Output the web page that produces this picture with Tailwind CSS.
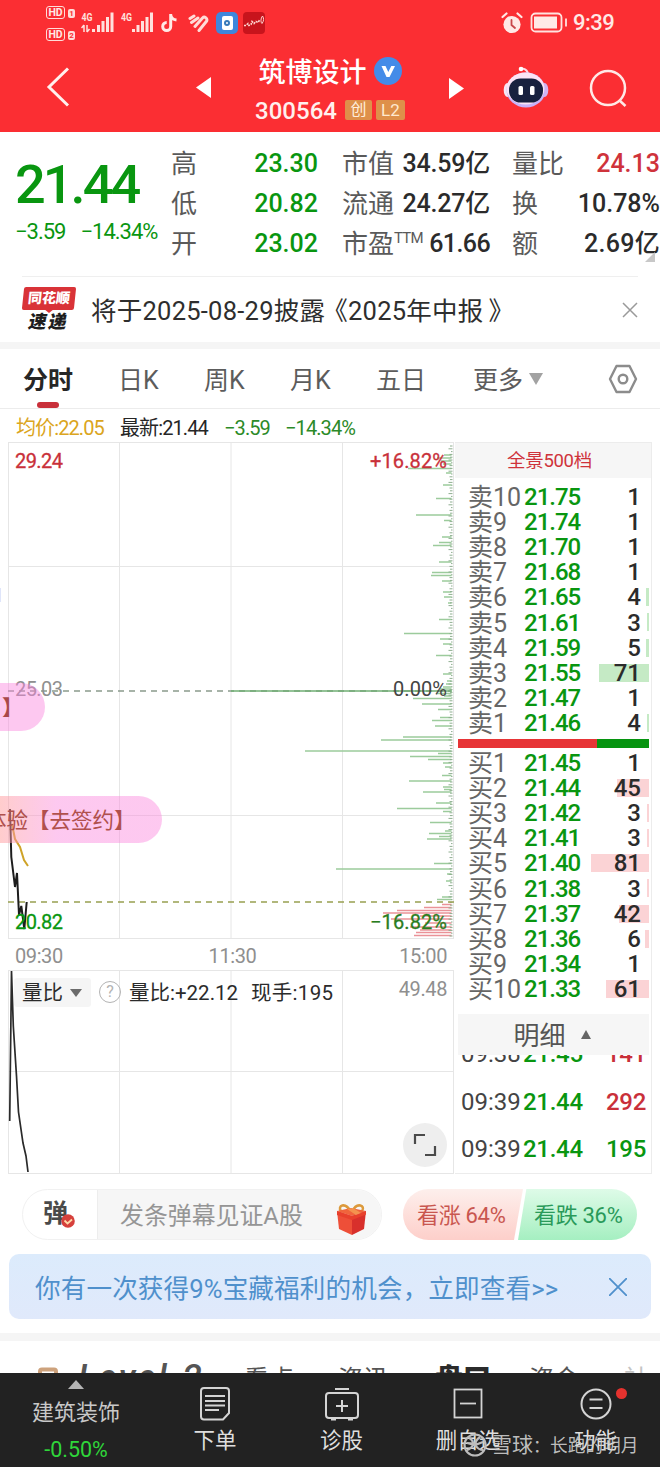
<!DOCTYPE html>
<html lang="zh-CN">
<head>
    <meta charset="UTF-8">
    <title>筑博设计 300564</title>
    <script src="https://cdn.jsdelivr.net/npm/@tailwindcss/browser@4"></script>
</head>
<body class="w-[660px] h-[1467px] overflow-hidden bg-white text-[#2b2b2b] font-[Roboto,'Noto_Sans_CJK_SC',sans-serif] whitespace-nowrap">
<div class="relative flex flex-col w-[660px] h-[1467px] overflow-hidden">

    <!-- 状态栏 -->
    <header class="h-[132px] shrink-0 bg-[#fb2e33] text-[#ffe9e6]">
        <div class="flex items-center h-[45px] pl-[46px] pr-[46px]">
            <div class="flex flex-col gap-[9px] w-[30px] mt-[2px]">
                <div class="flex items-center gap-[3px]">
                    <span class="w-[19px] h-[13px] border-[1.500px] border-[#ffdcd8] rounded-[3px] text-[10.500px] leading-[11px] font-bold text-center">HD</span>
                    <span class="w-[7px] h-[9px] mt-[2px] rounded-[2px] bg-[#ffdcd8] text-[#fb2e33] text-[8px] leading-[9px] font-bold text-center">1</span>
                </div>
                <div class="flex items-center gap-[3px]">
                    <span class="w-[19px] h-[13px] border-[1.500px] border-[#ffdcd8] rounded-[3px] text-[10.500px] leading-[11px] font-bold text-center">HD</span>
                    <span class="w-[7px] h-[9px] mt-[2px] rounded-[2px] bg-[#ffdcd8] text-[#fb2e33] text-[8px] leading-[9px] font-bold text-center">2</span>
                </div>
            </div>
            <svg class="ml-[5px] w-[34px] h-[24px]" viewBox="81 11 34 24" fill="#ffe1dd">
                <text x="81.500" y="20.500" font-size="10.500" font-weight="700" textLength="11" lengthAdjust="spacingAndGlyphs">4G</text>
                <path d="M84 25v7M84 25l-2.500 3M87 25v7M87 32l2.500-3" stroke="#ffe1dd" stroke-width="1.500" fill="none"/>
                <path d="M92 29h3v3h-3zM97 25h3v7h-3zM101.500 21h3v11h-3zM106 17h3v15h-3zM110.500 12.500h3V32h-3z"/>
            </svg>
            <svg class="ml-[5px] w-[34px] h-[24px]" viewBox="120 11 34 24" fill="#ffe1dd">
                <text x="121" y="20.500" font-size="10.500" font-weight="700" textLength="11" lengthAdjust="spacingAndGlyphs">4G</text>
                <path d="M132 29h3v3h-3zM136.500 25h3v7h-3zM141 21h3v11h-3zM145.500 17h3v15h-3zM150 12.500h3V32h-3z"/>
            </svg>
            <svg class="ml-[7px] w-[17px] h-[20px]" viewBox="0 0 17 20" fill="none" stroke="#ffe9e6" stroke-width="3">
                <path d="M9.700 1v12.500a4 4 0 1 1-4-4M9.700 2c.600 3.200 2.600 4.700 5.800 5"/>
            </svg>
            <!-- 运动健康 -->
            <svg class="ml-[10px] w-[21px] h-[18px]" viewBox="0 0 21 18" fill="none" stroke="#ffdcd8" stroke-width="3" stroke-linecap="round">
                <path d="M2 4.500l4-2.500M3.500 8.500L10 4M7 12.500L14.500 4c2-2 5.200 0 4.200 3L11 16.500"/>
            </svg>
            <div class="ml-[7px] w-[22px] h-[22px] rounded-[5px] bg-[#3f86dc] flex items-center justify-center">
                <div class="w-[11px] h-[14px] rounded-[2px] bg-white flex items-center justify-center">
                    <div class="w-[6px] h-[6px] rounded-full border-2 border-[#3878b8]"></div>
                </div>
            </div>
            <svg class="ml-[5px] w-[22px] h-[22px]" viewBox="0 0 22 22">
                <rect width="22" height="22" rx="4" fill="#c8141c"/>
                <path d="M1 13.500h2l2-2 1 2 2-1 1-3 2 2 2-2 2 1 2-3" stroke="#ffd5d0" stroke-width="1.600" stroke-dasharray="2 1" fill="none"/>
                <path d="M19.500 4c1.500 2 1.500 5-.500 7.500-1.500-1-1.500-5 .500-7.500" stroke="#ffd5d0" fill="none"/>
            </svg>
            <svg class="ml-auto w-[22px] h-[22px]" viewBox="0 0 22 22" fill="none" stroke="#ffe9e6" stroke-width="2.200" stroke-linecap="round">
                <circle cx="11" cy="12.500" r="8.600" fill="#ffe9e6" stroke="none"/>
                <path d="M1.500 5l4-3.500M20.500 5l-4-3.500"/>
                <path d="M10.500 8v5l3.500 3" stroke="#c8474a" stroke-width="1.800"/>
            </svg>
            <svg class="ml-[7px] w-[38px] h-[21px]" viewBox="0 0 38 21" fill="none" stroke="#ffe3e0" stroke-width="1.800">
                <rect x="1.500" y="1.500" width="30" height="18" rx="4"/>
                <rect x="4" y="4.500" width="23" height="12" fill="#ffe9e6" stroke="none"/>
                <path d="M36 6.500v8"/>
            </svg>
            <span class="ml-[5px] w-[41px] text-[22px] tracking-[-0.500px] font-medium">9:39</span>
        </div>

        <!-- 标题栏 -->
        <div class="grid grid-cols-[240px_180px_240px] h-[87px]">
            <div class="flex items-center pb-[3px]">
                <svg class="ml-[46px] w-[24px] h-[40px]" viewBox="0 0 24 40" fill="none" stroke="#fff0ee" stroke-width="3"><path d="M22 1.500L3 20l19 18.500"/></svg>
                <svg class="ml-[126px] mt-[2px] w-[16px] h-[22px]" viewBox="0 0 16 22" fill="#fff"><path d="M15 0v21L0 10.500z"/></svg>
            </div>
            <div class="flex flex-col items-center">
                <div class="flex items-center gap-[7px] h-[38px] mt-[7px] text-white">
                    <span class="mt-[4px] text-[27px] font-medium">筑博设计</span>
                    <svg class="w-[28px] h-[28px]" viewBox="0 0 28 28"><circle cx="14" cy="14" r="14" fill="#448be8"/><path d="M7.500 9h4l2.800 6 3-6H21l-5.500 11h-3z" fill="#fff"/></svg>
                </div>
                <div class="flex items-center h-[30px] mt-[5px]">
                    <span class="text-[24px] font-medium text-[#fff0ee] mt-[2px]">300564</span>
                    <span class="ml-[8px] w-[27px] h-[20px] rounded-[2px] bg-[#de904a] text-[#ffeedc] text-[16px] leading-[20px] text-center">创</span>
                    <span class="ml-[4px] w-[29px] h-[20px] rounded-[2px] bg-[#de904a] text-[#ffe9cf] text-[17px] leading-[21px] text-center">L2</span>
                </div>
            </div>
            <div class="flex items-center">
                <svg class="ml-[28px] w-[16px] h-[22px]" viewBox="0 0 16 22" fill="#fff"><path d="M1 0v21l15-10.500z"/></svg>
                <svg class="ml-[39px] mb-[4px] w-[46px] h-[42px]" viewBox="0 0 46 42">
                    <path d="M25 9c0-4-2-6-6-6.500" stroke="#ffd9e4" stroke-width="2" fill="none"/>
                    <circle cx="18" cy="3" r="2.300" fill="#fff"/>
                    <ellipse cx="4.500" cy="24" rx="3.800" ry="7" fill="#f8e6f4"/>
                    <ellipse cx="41.500" cy="24" rx="3.800" ry="7" fill="#d4b4f0"/>
                    <ellipse cx="23" cy="24" rx="19.500" ry="17.500" fill="#c9b2fa"/>
                    <ellipse cx="22.500" cy="22.500" rx="19" ry="16" fill="#fbe4f6"/>
                    <rect x="6" y="12.500" width="34" height="24" rx="11.500" fill="#18213f"/>
                    <rect x="15.500" y="20" width="4.500" height="9" rx="1.500" fill="#fff"/>
                    <rect x="27" y="20" width="4.500" height="9" rx="1.500" fill="#fff"/>
                </svg>
                <svg class="ml-[40px] w-[40px] h-[40px]" viewBox="0 0 40 40" fill="none" stroke="#ffe9e6" stroke-width="2.500"><circle cx="19" cy="19" r="17"/><path d="M30 31l6.500 6"/></svg>
            </div>
        </div>
    </header>

    <!-- 行情 -->
    <section class="relative flex h-[144px] shrink-0">
        <div class="w-[171px] pl-[15px] pt-[23px] text-[#099610]">
            <div class="text-[54px] leading-[60px] tracking-[-2.900px] font-medium">21.44</div>
            <div class="flex gap-[15px] mt-[5px] text-[22px] leading-[24px] tracking-[-1px]"><span>−3.59</span><span>−14.34%</span></div>
        </div>
        <div class="flex flex-col w-[147px] pt-[12px] text-[26px] leading-[40px] text-[#5a5a5a]">
            <div class="flex justify-between"><span>高</span><span class="text-[25px] font-medium text-[#099610]">23.30</span></div>
            <div class="flex justify-between"><span>低</span><span class="text-[25px] font-medium text-[#099610]">20.82</span></div>
            <div class="flex justify-between"><span>开</span><span class="text-[25px] font-medium text-[#099610]">23.02</span></div>
        </div>
        <div class="flex flex-col w-[148px] ml-[24px] pt-[12px] text-[26px] leading-[40px] text-[#5a5a5a]">
            <div class="flex justify-between"><span>市值</span><span class="text-[25px] tracking-[-0.200px] font-medium text-[#2b2b2b]">34.59亿</span></div>
            <div class="flex justify-between"><span>流通</span><span class="text-[25px] tracking-[-0.200px] font-medium text-[#2b2b2b]">24.27亿</span></div>
            <div class="flex justify-between"><span class="flex">市盈<span class="text-[15px] leading-[29px] tracking-[-0.800px]">TTM</span></span><span class="text-[25px] tracking-[-0.600px] font-medium text-[#2b2b2b]">61.66</span></div>
        </div>
        <div class="flex flex-col w-[148px] ml-[22px] pt-[12px] text-[26px] leading-[40px] text-[#5a5a5a]">
            <div class="flex justify-between"><span>量比</span><span class="text-[25px] font-medium text-[#cf333b]">24.13</span></div>
            <div class="flex justify-between"><span>换</span><span class="text-[25px] font-medium text-[#2b2b2b]">10.78%</span></div>
            <div class="flex justify-between"><span>额</span><span class="text-[25px] tracking-[0.300px] font-medium text-[#2b2b2b]">2.69亿</span></div>
        </div>
        <svg class="absolute left-[645px] top-[120px] w-[10px] h-[10px]" viewBox="0 0 10 10" fill="#c8c8c8"><path d="M10 0v10H0z"/></svg>
    </section>

    <!-- 公告 -->
    <section class="h-[66px] shrink-0 pl-[22px] pr-[22px]">
        <div class="flex items-center h-full border-t border-[#efefef]">
            <div class="w-[54px] h-[46px] flex flex-col items-center">
                <div class="w-[52px] h-[23px] -skew-x-6 rounded-[2px] bg-[#d93338] text-white text-[14px] leading-[22px] font-black text-center">同花顺</div>
                <div class="-mt-px w-0 h-0 border-x-[5px] border-x-transparent border-t-[4px] border-t-[#d93338]"></div>
                <div class="-mt-[3px] -skew-x-12 text-[18px] leading-[23px] font-black tracking-[2px] text-[#1e1e1e]">速递</div>
            </div>
            <span class="ml-[15px] mt-[3px] text-[25.500px] tracking-[0.250px] text-[#2e2e2e]">将于2025-08-29披露<span class="-ml-[3px]">《</span>2025年中报<span class="ml-[5px]">》</span></span>
            <svg class="ml-auto w-[16px] h-[16px]" viewBox="0 0 16 16" stroke="#9a9a9a" stroke-width="1.500"><path d="M1 1l14 14M15 1L1 15"/></svg>
        </div>
    </section>
    <div class="h-[7px] shrink-0 bg-[#f5f5f5]"></div>

    <!-- 周期切换 -->
    <nav class="relative flex items-center h-[60px] shrink-0 border-b border-[#ececec] pl-[23px] pr-[22px] text-[25px] text-[#5c5c5c]">
        <span class="mt-[4px] w-[95px] font-bold text-[#262626]">分时</span>
        <span class="mt-[4px] w-[86px]">日K</span>
        <span class="mt-[4px] w-[86px]">周K</span>
        <span class="mt-[4px] w-[86px]">月K</span>
        <span class="mt-[4px] w-[97px]">五日</span>
        <span class="mt-[4px]">更多</span>
        <svg class="ml-[6px] w-[14px] h-[12px]" viewBox="0 0 14 12" fill="#a2a2a2"><path d="M0 0h14L7 12z"/></svg>
        <svg class="ml-auto w-[30px] h-[30px]" viewBox="0 0 30 30" fill="none" stroke="#8c8c8c" stroke-width="2.400" stroke-linejoin="round"><path d="M8.500 2h13L28 15l-6.500 13h-13L2 15z"/><circle cx="15" cy="15" r="4.300"/></svg>
        <div class="absolute left-[37px] top-[53px] w-[22px] h-[6px] rounded-full bg-[#c9303a]"></div>
    </nav>

    <div class="flex items-center h-[33px] shrink-0 pl-[16px] pt-[4px] text-[20px] tracking-[-0.900px]">
        <span class="w-[104px] text-[#dba520]">均价:22.05</span>
        <span class="w-[104px] text-[#262626]">最新:21.44</span>
        <span class="w-[61px] text-[#2c8a28]">−3.59</span>
        <span class="text-[#2c8a28]">−14.34%</span>
    </div>

    <!-- 分时图 + 盘口 -->
    <main class="flex h-[732px] shrink-0 pl-[8px]">
        <div class="flex flex-col w-[446px]">
            <svg class="w-[446px] h-[498px] shrink-0" viewBox="8 442 446 498" font-size="20">
                <path d="M8.500 442v497M119.500 442v497M231 442v497M342.500 442v497M453.500 442v497M8 442.500h446M8 566.500h446M8 815.500h446M8 938.500h446" stroke="#e6e6e6" fill="none"/>
                <path id="sellBars" stroke="#9ccb9c" stroke-width="1.600" fill="none"/>
                <path id="buyBars" stroke="#ea9298" stroke-width="1.500" fill="none"/>
                <path id="ticks" stroke="#8fae90" stroke-width="1" fill="none"/>
                <path d="M8 691h443" stroke="#8a9a8c" stroke-width="1.500" stroke-dasharray="6 5"/>
                <path d="M231 691h221" stroke="#6fae73" stroke-width="1.500"/>
                <path d="M8 902h446" stroke="#98a050" stroke-width="1.300" stroke-dasharray="6 5"/>
                <path d="M12 824l3 15 5 8 4 13 4 6" stroke="#cfa328" stroke-width="2" fill="none"/>
                <path d="M10 809l1.300 48L15 887l2-14 2 42 2.300-9 3 23 2.400-27" stroke="#1d1d1d" stroke-width="2" fill="none"/>
                <g stroke-width=".3">
                    <text x="15" y="468" fill="#c9303a" stroke="#c9303a" textLength="48">29.24</text>
                    <text x="370" y="468" fill="#c9303a" stroke="#c9303a" textLength="77">+16.82%</text>
                    <text x="15" y="696" fill="#8f8f8f" textLength="48">25.03</text>
                    <text x="393" y="695.500" fill="#444" textLength="54">0.00%</text>
                    <text x="15" y="928.500" fill="#099610" stroke="#099610" textLength="48">20.82</text>
                    <text x="370" y="928.500" fill="#2a7d1e" stroke="#2a7d1e" textLength="77">−16.82%</text>
                </g>
            </svg>
            <div class="flex items-center justify-between h-[30px] pl-[7px] pr-[7px] pt-[1px] text-[20px] tracking-[-0.400px] text-[#8f8f8f]">
                <span>09:30</span><span class="ml-[3px]">11:30</span><span>15:00</span>
            </div>
            <div class="relative h-[204px]">
                <svg class="block w-[446px] h-[204px]" viewBox="8 970 446 204">
                    <path d="M8.500 970v204M119.500 970v204M231 970v204M342.500 970v204M453.500 970v204M8 970.500h446M8 1071.500h446M8 1173.500h446" stroke="#e6e6e6" fill="none"/>
                    <path d="M9.700 1121L11.500 971l1.800 55 3.200 50 2 36 4.500 31 3 13 2 16" stroke="#2a2a2a" stroke-width="1.700" fill="none"/>
                </svg>
                <div class="absolute inset-x-0 top-[7px] flex items-center h-[30px] pl-[6px] pr-[7px] text-[20.500px] text-[#2b2b2b]">
                    <span class="flex items-center w-[77px] h-[29px] pl-[8px] pt-[2px] bg-[#f3f2f3]/80 rounded-[3px]">量比
                        <svg class="ml-[7px] w-[12px] h-[8px]" viewBox="0 0 12 8" fill="#6b6b6b"><path d="M0 0h12L6 8z"/></svg>
                    </span>
                    <span class="ml-[8px] w-[22px] h-[22px] rounded-full border-[1.500px] border-[#b3b3b3] text-[#b3b3b3] text-[16px] leading-[20px] text-center">?</span>
                    <span class="ml-[8px] mt-[2px] w-[122px]">量比:+22.12</span>
                    <span class="mt-[2px] tracking-[0.300px]">现手:195</span>
                    <span class="ml-auto mb-[7px] text-[20px] tracking-[-0.400px] text-[#8f8f8f]">49.48</span>
                </div>
                <div class="absolute left-[395px] top-[153px] w-[44px] h-[44px] rounded-full bg-[#eeeeee] flex items-center justify-center">
                    <svg class="w-[24px] h-[24px]" viewBox="0 0 24 24" fill="none" stroke="#4a4a4a" stroke-width="2.200"><path d="M2 11V2h10M22 13v9H12"/></svg>
                </div>
            </div>
        </div>

        <!-- 十档盘口 -->
        <div class="w-[197px] ml-px border-t border-r border-b border-[#ececec]">
            <div class="h-[35px] bg-[#f6f6f6] text-[18.500px] tracking-[-0.300px] leading-[37px] pl-[52px] text-[#cf333b]">全景500档</div>
            <div id="sellRows" class="h-[260px] pt-[7px]"></div>
            <div class="flex h-[9px] mt-[1px] ml-[3px] mr-[2px]">
                <div class="w-[139px] bg-[#e73436]"></div>
                <div class="grow bg-[#069410]"></div>
            </div>
            <div id="buyRows" class="h-[266px] pt-[3px]"></div>
            <div class="flex items-center justify-center h-[41px] ml-[3px] mr-[2px] bg-[#f6f6f6] text-[26px] text-[#555]"><span class="mt-[3px] -ml-[3px]">明细</span>
                <svg class="ml-[15px] w-[10px] h-[9px]" viewBox="0 0 10 9" fill="#666"><path d="M5 0l5 9H0z"/></svg>
            </div>
            <div id="trades" class="flex flex-col justify-end h-[118px] overflow-hidden"></div>
        </div>
    </main>

    <!-- 弹幕 -->
    <section class="flex items-center h-[80px] shrink-0 pl-[22px] pt-[1px]">
        <div class="flex items-center w-[360px] h-[51px] rounded-full border border-[#f1f1f1] overflow-hidden">
            <div class="relative w-[75px] h-full border-r border-[#ededed] pl-[20px] text-[25px] leading-[48px] font-bold text-[#4a4a4a]">弹
                <svg class="absolute left-[38px] top-[24px] w-[14px] h-[14px]" viewBox="0 0 14 14"><circle cx="7" cy="7" r="6.800" fill="#d6403c"/><path d="M3.500 6.500L6.500 9.500l4.500-4" stroke="#ffd9a8" stroke-width="1.800" fill="none"/></svg>
            </div>
            <div class="flex items-center grow h-full bg-[#f6f6f6] pl-[22px]">
                <span class="mt-[5px] text-[23.900px] text-[#959595]">发条弹幕见证A股</span>
                <svg class="ml-[33px] mt-[10px] w-[31px] h-[33px]" viewBox="0 0 31 33">
                    <path d="M15 9C9-2 1 3 5 8zM16 9c5-11 14-6 10-1z" fill="none" stroke="#dc9a3c" stroke-width="2.500"/>
                    <path d="M1 8l14-3 15 3-14 5z" fill="#f0643c"/>
                    <path d="M1 8l15 5v19L3 26z" fill="#ee4f38"/>
                    <path d="M30 8l-14 5v19l12-6z" fill="#d8302c"/>
                    <path d="M1 8l15 5 14-5v3.500L16 17 1 12z" fill="#e8402c"/>
                    <path d="M11 6l9 6 5-2-8-5z" fill="#f6b25a" opacity=".6"/>
                </svg>
            </div>
        </div>
        <div class="flex ml-[21px] h-[51px] text-[22px] tracking-[-0.300px]">
            <div class="w-[120px] pl-[14px] leading-[53px] rounded-l-full bg-linear-to-b from-[#fdefec] to-[#fdcfca] text-[#c9564f] [clip-path:polygon(0_0,100%_0,92.500%_100%,0_100%)]">看涨 64%</div>
            <div class="-ml-[5px] w-[119px] pl-[16px] leading-[53px] rounded-r-full bg-linear-to-b from-[#defbe8] to-[#a5efc1] text-[#2a9a5a] [clip-path:polygon(7%_0,100%_0,100%_100%,0_100%)]">看跌 36%</div>
        </div>
    </section>

    <section class="flex items-center h-[65px] shrink-0 mx-[9px] rounded-[10px] bg-linear-to-b from-[#dcebfc] to-[#e0e9fb] pl-[26px] pr-[24px] text-[25.600px] tracking-[0.120px] text-[#4f90cc]">
        <span class="mt-[5px]">你有一次获得9%宝藏福利的机会，立即查看&gt;&gt;</span>
        <svg class="ml-auto w-[18px] h-[18px]" viewBox="0 0 18 18" stroke="#4f90cc" stroke-width="1.800"><path d="M0 0l18 18M18 0L0 18"/></svg>
    </section>
    <div class="h-[8px] mt-[14px] shrink-0 bg-[#f5f5f5]"></div>

    <nav class="flex h-[32px] shrink-0 overflow-hidden pl-[37px] pt-[22px] text-[25px] leading-[34px] text-[#555]">
        <svg class="w-[22px] h-[24px] mt-[4px] shrink-0" viewBox="0 0 22 24" fill="none" stroke="#cda27c" stroke-width="4"><rect x="3" y="2.500" width="16" height="18" rx="2"/></svg>
        <span class="ml-[19px] w-[166px] shrink-0 text-[35px] leading-[29px] italic font-medium tracking-[2.200px]">Level-2</span>
        <span class="w-[94px] shrink-0">看点</span>
        <span class="w-[97px] shrink-0">资讯</span>
        <span class="w-[94px] shrink-0 text-[28px] font-black text-[#2b2b2b]">盘口</span>
        <span class="w-[95px] shrink-0">资金</span>
        <span class="shrink-0 text-[#c4c4c4]">社</span>
    </nav>

    <!-- 底部导航 -->
    <footer class="relative h-[94px] shrink-0 bg-[#222222] text-[#dedede] text-[21.500px] grid grid-cols-[152px_126px_127px_126px_129px]">
        <div class="flex flex-col items-center">
            <svg class="mt-[7px] w-[16px] h-[9px]" viewBox="0 0 16 9" fill="#b5b5b5"><path d="M8 0l8 9H0z"/></svg>
            <span class="mt-[8px] text-[22px] leading-[32px] text-[#c8c8c8]">建筑装饰</span>
            <span class="mt-[6px] text-[21.500px] leading-[30px] text-[#2fd63a]">-0.50%</span>
        </div>
        <div class="flex flex-col items-center pt-[13px]">
            <svg class="w-[32px] h-[36px]" viewBox="0 0 32 36" fill="none" stroke="#d4d4d4" stroke-width="2"><path d="M5 2h22a3 3 0 0 1 3 3v22l-6 6.500H5a3 3 0 0 1-3-3V5a3 3 0 0 1 3-3zM6 10h20M6 15h20M6 19.500h20M6 24h14"/></svg>
            <span class="mt-[4px] leading-[30px]">下单</span>
        </div>
        <div class="flex flex-col items-center pt-[13px]">
            <svg class="w-[36px] h-[36px]" viewBox="0 0 36 36" fill="none" stroke="#d4d4d4" stroke-width="2"><rect x="2" y="7" width="32" height="25" rx="3"/><path d="M11 3h14M18 14v12M12 20h12M7 33.500h5M24 33.500h5"/></svg>
            <span class="mt-[4px] leading-[30px]">诊股</span>
        </div>
        <div class="flex flex-col items-center pt-[13px]">
            <svg class="w-[32px] h-[36px]" viewBox="0 0 32 36" fill="none" stroke="#d4d4d4" stroke-width="1.800"><rect x="2.500" y="3.500" width="27" height="28"/><path d="M8 17.500h16"/></svg>
            <span class="mt-[4px] leading-[30px]">删自选</span>
        </div>
        <div class="flex flex-col items-center pt-[13px]">
            <svg class="w-[34px] h-[36px]" viewBox="0 0 34 36" fill="none" stroke="#d4d4d4" stroke-width="2"><circle cx="17" cy="18" r="14.500"/><path d="M10.500 13.500h13M10.500 22h13"/></svg>
            <span class="mt-[4px] leading-[30px]">功能</span>
        </div>
        <div class="absolute left-[616px] top-[15px] w-[11px] h-[11px] rounded-full bg-[#e5322e]"></div>
        <!-- 水印 -->
        <div class="absolute left-[463px] top-[58px] flex items-center h-[28px] text-[#d2d2d2]/90">
            <svg class="w-[24px] h-[24px]" viewBox="0 0 24 24" fill="none" stroke="#bdbdbd" stroke-width="2.200"><circle cx="12" cy="12" r="10.500"/><path d="M6 5c3 1 5 5 4 7s-4 5-6 5M17 4c-3 2-6 6-4 9s5 4 7 4M4 10l8 2 8-3"/></svg>
            <span class="ml-[4px] mt-[2px] w-[59px] text-[21px]">雪球<span class="text-[17px]">：</span></span>
            <span class="mt-[2px] text-[17.700px]">长跑的明月</span>
        </div>
    </footer>

    <!-- 弹幕气泡 -->
    <div class="absolute left-0 top-[683px] w-[45px] h-[48px] rounded-r-full bg-[#fb86dd]/45 text-[#a8484a] text-[21px] leading-[50px] font-medium"><span class="ml-[2px]">】</span></div>
    <div class="absolute left-0 top-[796px] w-[162px] h-[47px] rounded-r-full bg-linear-to-r from-[#ff9a9a]/50 to-[#fb86dd]/45 to-35% text-[#b0504c] text-[21.500px] leading-[49px] overflow-hidden"><span class="-ml-[15px]">体验【去签约】</span></div>
    <div class="absolute left-0 top-[588px] w-px h-[14px] bg-[#dfe5fa]"></div>
</div>

<script>
    // [档位, 价格, 数量, 量柱宽度]
    const sells = [
        ['卖10', '21.75', 1, 0], ['卖9', '21.74', 1, 0], ['卖8', '21.70', 1, 0], ['卖7', '21.68', 1, 0],
        ['卖6', '21.65', 4, 3], ['卖5', '21.61', 3, 2], ['卖4', '21.59', 5, 3], ['卖3', '21.55', 71, 50],
        ['卖2', '21.47', 1, 0], ['卖1', '21.46', 4, 2],
    ];
    const buys = [
        ['买1', '21.45', 1, 0], ['买2', '21.44', 45, 32], ['买3', '21.42', 3, 2], ['买4', '21.41', 3, 2],
        ['买5', '21.40', 81, 58], ['买6', '21.38', 3, 2], ['买7', '21.37', 42, 30], ['买8', '21.36', 6, 4],
        ['买9', '21.34', 1, 0], ['买10', '21.33', 61, 43],
    ];

    function renderRows(id, rows, barClass) {
        document.getElementById(id).innerHTML = rows.map(([level, price, qty, bar]) => `
            <div class="relative flex items-center h-[25.100px] pl-[13px] text-[24px] leading-[25px]">
                <span class="w-[56px] text-[25px] text-[#666]">${level}</span>
                <span class="tracking-[-1px] font-medium text-[#099610]">${price}</span>
                <i class="absolute right-[2px] top-[3px] h-[18px] ${barClass}" style="width:${bar}px"></i>
                <span class="relative ml-auto mr-[10px] font-medium">${qty}</span>
            </div>`).join('');
    }
    renderRows('sellRows', sells, 'bg-[#c5eac5]');
    renderRows('buyRows', buys, 'bg-[#fbd3d5]');

    const trades = [
        ['09:38', '21.45', 141, 'text-[#c9303a]'],
        ['09:39', '21.44', 292, 'text-[#c9303a]'],
        ['09:39', '21.44', 195, 'text-[#099610]'],
    ];
    document.getElementById('trades').innerHTML = trades.map(([time, price, qty, color]) => `
        <div class="flex items-center h-[47.500px] shrink-0 pl-[6px] pr-[5px] text-[24px]">
            <span class="w-[62px] text-[#444]">${time}</span>
            <span class="tracking-[-0.300px] font-medium text-[#099610]">${price}</span>
            <span class="ml-auto tracking-[-0.300px] font-medium ${color}">${qty}</span>
        </div>`).join('');

    // 筹码分布 [y, 左端x]
    const sellBars = [
        [455,444],[458,437],[461,441],[464,443],[468.500,408],[473,446],[485,443],[498.500,436],[515,416],[520.500,444],
        [537,442],[542.500,439],[545.500,433],[562,439],[572.500,432],[575.500,431],[581,442],[592,443],[597,444],[603,448],
        [619.500,439],[633.500,404],[639,440],[644,443],[655.500,436],[674,443],[681,447],[684,446],[687,443],[689,440],
        [693.500,436],[696,444],[698.500,413],[704,422],[709.500,438],[717.500,440],[720.500,432],[726,435],[737,403],[740,381],
        [751,305],[753.500,438],[756.500,410],[759.500,428],[763,443],[767,445],[775.500,442],[781,409],[787,443],[789.500,444],
        [792,423],[803,436],[808.500,397],[811.500,443],[822.500,430],[831,445],[833.500,429],[836.500,439],[839,427],
        [863.500,434],[869,336],[874,447],[881,446],[897,442],[899.500,437],
    ];
    const buyBars = [
        [904.500,442],[907.500,424],[910.500,397],[913,383],[916,420],[919,391],[923,425],[927,410],[930,420],[932.500,416],[935.500,414],
    ];
    const toPath = bars => bars.map(([y, x]) => `M${x} ${y}H451.500`).join('');
    document.getElementById('sellBars').setAttribute('d', toPath(sellBars));
    document.getElementById('buyBars').setAttribute('d', toPath(buyBars));

    let ticks = '';
    for (let y = 446, i = 0; y < 936; y += 2.8, i++) {
        ticks += `M${[450, 448.5, 451, 449.5][i % 4]} ${y}H452.5`;
    }
    document.getElementById('ticks').setAttribute('d', ticks);
</script>
</body>
</html>
